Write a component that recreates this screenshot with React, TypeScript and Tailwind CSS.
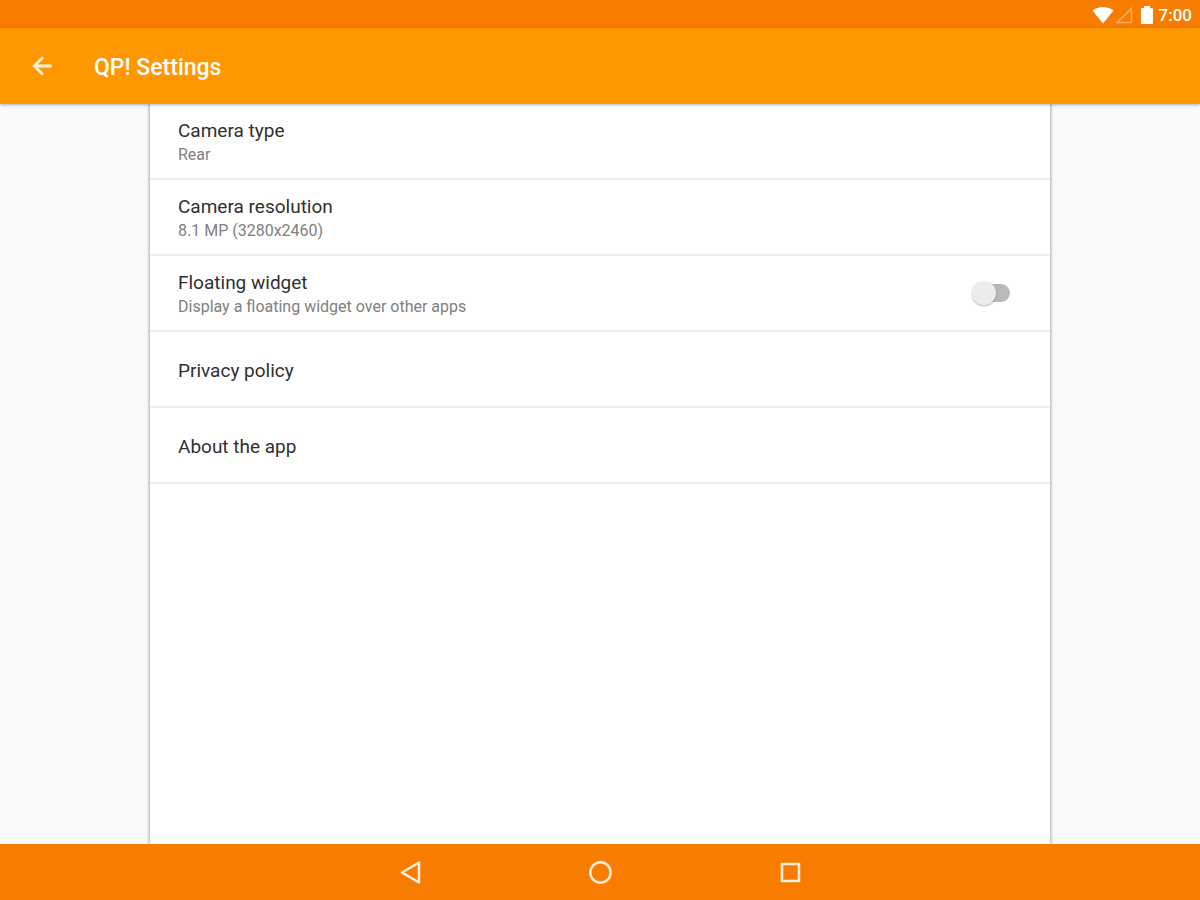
import React, { useState } from 'react';

interface SettingTextProps {
  title: string;
  summary?: string;
}

interface SettingItem extends SettingTextProps {
  id: string;
}

const cameraSettings: SettingItem[] = [
  { id: 'camera-type', title: 'Camera type', summary: 'Rear' },
  { id: 'camera-resolution', title: 'Camera resolution', summary: '8.1 MP (3280x2460)' },
];

const infoSettings: SettingItem[] = [
  { id: 'privacy', title: 'Privacy policy' },
  { id: 'about', title: 'About the app' },
];

const rowStyles = 'flex w-full min-h-19 items-center border-b-2 border-[#ededed] pt-1 pl-7 pr-10 text-left';

const SettingText: React.FC<SettingTextProps> = ({ title, summary }) => (
  <span className="flex flex-col">
    <span className="text-[19px] leading-6 text-[#303030]">{title}</span>
    {summary && <span className="text-base leading-6 text-[#808080]">{summary}</span>}
  </span>
);

const SettingButton: React.FC<{ item: SettingItem }> = ({ item }) => (
  <li>
    <button type="button" className={rowStyles}>
      <SettingText title={item.title} summary={item.summary} />
    </button>
  </li>
);

const StatusBar: React.FC = () => (
  <div className="flex h-7 items-center justify-end bg-[#f77c00] pt-[3px] pr-2 text-white">
    <svg className="h-5 w-6" viewBox="0 0 24 20" fill="currentColor" aria-label="Wi-Fi">
      <path d="M12 17.500 1.500 4.500C4.300 2.300 8 1 12 1s7.700 1.300 10.500 3.500z" />
    </svg>
    <svg className="h-5 w-5" viewBox="0 0 20 20" fill="none" stroke="currentColor" strokeOpacity="0.4" strokeWidth="1.500" aria-label="No signal">
      <path d="M2 16.500 16.500 2.500v14z" />
    </svg>
    <svg className="ml-1 h-5 w-4" viewBox="0 0 16 20" fill="currentColor" aria-label="Battery">
      <path d="M5 0h6v2h2a1 1 0 0 1 1 1v14a1 1 0 0 1-1 1H3a1 1 0 0 1-1-1V3a1 1 0 0 1 1-1h2z" />
    </svg>
    <span className="ml-1 text-[17px] font-medium">7:00</span>
  </div>
);

const AppBar: React.FC = () => (
  <header className="relative z-10 flex h-19 items-center bg-[#ff9800] pl-7 text-white shadow-[0_1px_3px_rgba(0,0,0,0.3)]">
    <button type="button" aria-label="Back" className="text-[#fff3dc]">
      <svg className="size-7" viewBox="0 0 24 24" fill="currentColor" stroke="currentColor" strokeWidth="0.500">
        <path d="M20 11H7.830l5.590-5.590L12 4l-8 8 8 8 1.410-1.410L7.830 13H20z" />
      </svg>
    </button>
    <h1 className="ml-[38px] pt-1 text-[23px] font-medium">QP! Settings</h1>
  </header>
);

const NavigationBar: React.FC = () => (
  <nav className="relative z-10 flex h-14 items-center justify-center gap-40 bg-[#f77c00] text-[#fff0dc]">
    <button type="button" aria-label="Back">
      <svg className="size-[30px]" viewBox="0 0 30 30" fill="none" stroke="currentColor" strokeWidth="2.500" strokeLinejoin="round">
        <path d="M24 5.500v20L7 15.500z" />
      </svg>
    </button>
    <button type="button" aria-label="Home">
      <svg className="size-[30px]" viewBox="0 0 30 30" fill="none" stroke="currentColor" strokeWidth="2.500">
        <circle cx="15.500" cy="15.500" r="10.200" />
      </svg>
    </button>
    <button type="button" aria-label="Recent apps">
      <svg className="size-[30px]" viewBox="0 0 30 30" fill="none" stroke="currentColor" strokeWidth="2.500">
        <path d="M7 7h17v17H7z" />
      </svg>
    </button>
  </nav>
);

const App: React.FC = () => {
  const [floatingWidget, setFloatingWidget] = useState(false);

  return (
    <div className="flex min-h-screen flex-col bg-[#fafafa] font-['Roboto',sans-serif]">
      <StatusBar />
      <AppBar />
      <main className="mx-auto w-3/4 grow bg-white shadow-[0_0_3px_1px_rgba(0,0,0,0.3)]">
        <ul>
          {cameraSettings.map(item => <SettingButton key={item.id} item={item} />)}
          <li>
            <label className={`${rowStyles} justify-between`}>
              <SettingText title="Floating widget" summary="Display a floating widget over other apps" />
              <input
                type="checkbox"
                role="switch"
                checked={floatingWidget}
                onChange={(e) => setFloatingWidget(e.target.checked)}
                className="relative mb-1 h-[18px] w-[34px] appearance-none rounded-full bg-[#b9b9b9] before:absolute before:-left-1 before:-top-[3px] before:size-6 before:rounded-full before:bg-[#ececec] before:shadow-[0_1px_2px_rgba(0,0,0,0.3)] checked:bg-[#ffcc80] checked:before:left-4 checked:before:bg-[#ff9800]"
              />
            </label>
          </li>
          {infoSettings.map(item => <SettingButton key={item.id} item={item} />)}
        </ul>
      </main>
      <NavigationBar />
    </div>
  );
};

export default App;
